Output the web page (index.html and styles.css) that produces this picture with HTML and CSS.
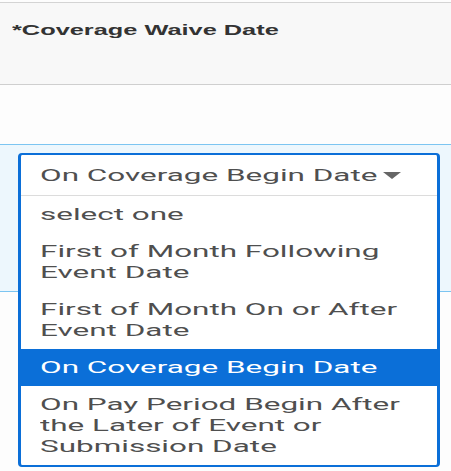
FILE: index.html
```html
<!DOCTYPE html>
<html lang="en">
<head>
    <meta charset="UTF-8">
    <meta name="viewport" content="width=device-width, initial-scale=1.0">
    <title>Coverage Waive Date</title>
    <link rel="stylesheet" href="styles.css">
</head>
<body>
    <!-- Label panel -->
    <div class="panel">
        <span class="label">*Coverage Waive Date</span>
    </div>

    <div class="gap"></div>

    <!-- Field row with open select -->
    <div class="field-row">
        <div class="select">
            <div class="select-head">
                <span class="txt">On Coverage Begin Date</span>
                <span class="caret"></span>
            </div>
            <ul class="options">
                <li><span class="txt">select one</span></li>
                <li><span class="txt">First of Month Following<br>Event Date</span></li>
                <li><span class="txt">First of Month On or After<br>Event Date</span></li>
                <li class="selected"><span class="txt">On Coverage Begin Date</span></li>
                <li><span class="txt">On Pay Period Begin After<br>the Later of Event or<br>Submission Date</span></li>
            </ul>
        </div>
    </div>

    <div class="rest"></div>
</body>
</html>
```

FILE: styles.css
```css
body {
    margin: 0;
    padding: 0;
    background-color: #fdfdfd;
    font-family: 'Roboto', 'Liberation Sans', sans-serif;
}
.panel {
    margin-top: 2px;
    height: 83px;
    padding: 17px 0 0 12px;
    box-sizing: border-box;
    background-color: #f8f8f8;
    border-top: 1px solid #d4d4d4;
    border-bottom: 1px solid #cfcfcf;
}
.label {
    display: inline-block;
    font-family: 'Liberation Sans', Arial, sans-serif;
    font-weight: bold;
    font-size: 15px;
    line-height: 18px;
    color: #333;
    white-space: nowrap;
    transform: scaleX(1.69);
    transform-origin: 0 50%;
}
.gap {
    height: 59px;
}
.field-row {
    height: 148px;
    padding: 8px 11px 0 18px;
    box-sizing: border-box;
    background-color: #edf7fd;
    border-top: 1px solid #7cc5f1;
    border-bottom: 1px solid #7cc5f1;
}
.select {
    position: relative;
    z-index: 1;
    background-color: #fff;
    border: 2px solid #0b6fd8;
    border-left-width: 3px;
    border-right-width: 3px;
    border-radius: 4px;
}
.txt {
    display: inline-block;
    white-space: nowrap;
    transform: scaleX(1.85);
    transform-origin: 0 50%;
}
.select-head {
    display: flex;
    align-items: center;
    height: 40px;
    padding: 0 36px 0 19px;
    border-bottom: 1px solid #dcdcdc;
    font-size: 17px;
    color: #4f4f4f;
}
.caret {
    margin-left: auto;
    width: 0;
    height: 0;
    border-left: 9px solid transparent;
    border-right: 9px solid transparent;
    border-top: 7px solid #666;
}
.options {
    list-style: none;
    margin: 0;
    padding: 0;
}
.options li {
    padding: 8px 19px;
    font-size: 17px;
    line-height: 21px;
    color: #4f4f4f;
}
.options li.selected {
    background-color: #0b6fd8;
    color: #fff;
}
.rest {
    height: 176px;
}
```
